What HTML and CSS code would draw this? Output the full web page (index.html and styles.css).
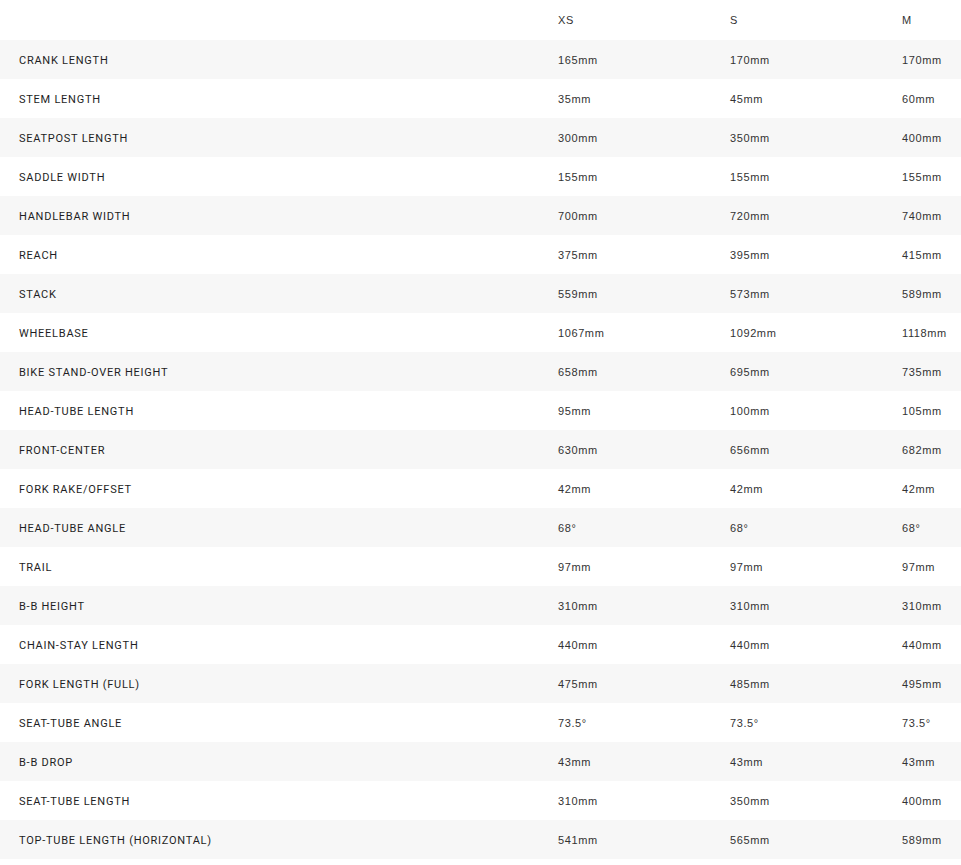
FILE: index.html
```html
<!DOCTYPE html>
<html>
<head>
<meta charset="utf-8">
<link rel="stylesheet" href="styles.css">
</head>
<body>
<div class="table">
  <div class="row head"><div class="cell label"></div><div class="cell val">XS</div><div class="cell val">S</div><div class="cell val">M</div></div>
  <div class="row"><div class="cell label">CRANK LENGTH</div><div class="cell val">165mm</div><div class="cell val">170mm</div><div class="cell val">170mm</div></div>
  <div class="row"><div class="cell label">STEM LENGTH</div><div class="cell val">35mm</div><div class="cell val">45mm</div><div class="cell val">60mm</div></div>
  <div class="row"><div class="cell label">SEATPOST LENGTH</div><div class="cell val">300mm</div><div class="cell val">350mm</div><div class="cell val">400mm</div></div>
  <div class="row"><div class="cell label">SADDLE WIDTH</div><div class="cell val">155mm</div><div class="cell val">155mm</div><div class="cell val">155mm</div></div>
  <div class="row"><div class="cell label">HANDLEBAR WIDTH</div><div class="cell val">700mm</div><div class="cell val">720mm</div><div class="cell val">740mm</div></div>
  <div class="row"><div class="cell label">REACH</div><div class="cell val">375mm</div><div class="cell val">395mm</div><div class="cell val">415mm</div></div>
  <div class="row"><div class="cell label">STACK</div><div class="cell val">559mm</div><div class="cell val">573mm</div><div class="cell val">589mm</div></div>
  <div class="row"><div class="cell label">WHEELBASE</div><div class="cell val">1067mm</div><div class="cell val">1092mm</div><div class="cell val">1118mm</div></div>
  <div class="row"><div class="cell label">BIKE STAND-OVER HEIGHT</div><div class="cell val">658mm</div><div class="cell val">695mm</div><div class="cell val">735mm</div></div>
  <div class="row"><div class="cell label">HEAD-TUBE LENGTH</div><div class="cell val">95mm</div><div class="cell val">100mm</div><div class="cell val">105mm</div></div>
  <div class="row"><div class="cell label">FRONT-CENTER</div><div class="cell val">630mm</div><div class="cell val">656mm</div><div class="cell val">682mm</div></div>
  <div class="row"><div class="cell label">FORK RAKE/OFFSET</div><div class="cell val">42mm</div><div class="cell val">42mm</div><div class="cell val">42mm</div></div>
  <div class="row"><div class="cell label">HEAD-TUBE ANGLE</div><div class="cell val">68°</div><div class="cell val">68°</div><div class="cell val">68°</div></div>
  <div class="row"><div class="cell label">TRAIL</div><div class="cell val">97mm</div><div class="cell val">97mm</div><div class="cell val">97mm</div></div>
  <div class="row"><div class="cell label">B-B HEIGHT</div><div class="cell val">310mm</div><div class="cell val">310mm</div><div class="cell val">310mm</div></div>
  <div class="row"><div class="cell label">CHAIN-STAY LENGTH</div><div class="cell val">440mm</div><div class="cell val">440mm</div><div class="cell val">440mm</div></div>
  <div class="row"><div class="cell label">FORK LENGTH (FULL)</div><div class="cell val">475mm</div><div class="cell val">485mm</div><div class="cell val">495mm</div></div>
  <div class="row"><div class="cell label">SEAT-TUBE ANGLE</div><div class="cell val">73.5°</div><div class="cell val">73.5°</div><div class="cell val">73.5°</div></div>
  <div class="row"><div class="cell label">B-B DROP</div><div class="cell val">43mm</div><div class="cell val">43mm</div><div class="cell val">43mm</div></div>
  <div class="row"><div class="cell label">SEAT-TUBE LENGTH</div><div class="cell val">310mm</div><div class="cell val">350mm</div><div class="cell val">400mm</div></div>
  <div class="row"><div class="cell label">TOP-TUBE LENGTH (HORIZONTAL)</div><div class="cell val">541mm</div><div class="cell val">565mm</div><div class="cell val">589mm</div></div>
</div>
</body>
</html>
```
FILE: styles.css
```css
html, body {
  margin: 0;
  padding: 0;
  background: #fff;
}
.table {
  display: flex;
  flex-direction: column;
  width: 961px;
}
.row {
  display: grid;
  grid-template-columns: 539px 172px 172px 78px;
  height: 39px;
  align-items: center;
}
.row:nth-child(even) {
  background: #f7f7f7;
}
.row.head {
  height: 40px;
}
.cell {
  padding-left: 19px;
  white-space: nowrap;
}
.label {
  font-family: Roboto, "Liberation Sans", sans-serif;
  font-size: 11px;
  font-weight: 400;
  letter-spacing: 0.75px;
  color: #1e1e24;
  padding-top: 2px;
}
.val {
  font-family: "Liberation Sans", Arial, sans-serif;
  font-size: 11px;
  letter-spacing: 0.6px;
  color: #333;
}
```
